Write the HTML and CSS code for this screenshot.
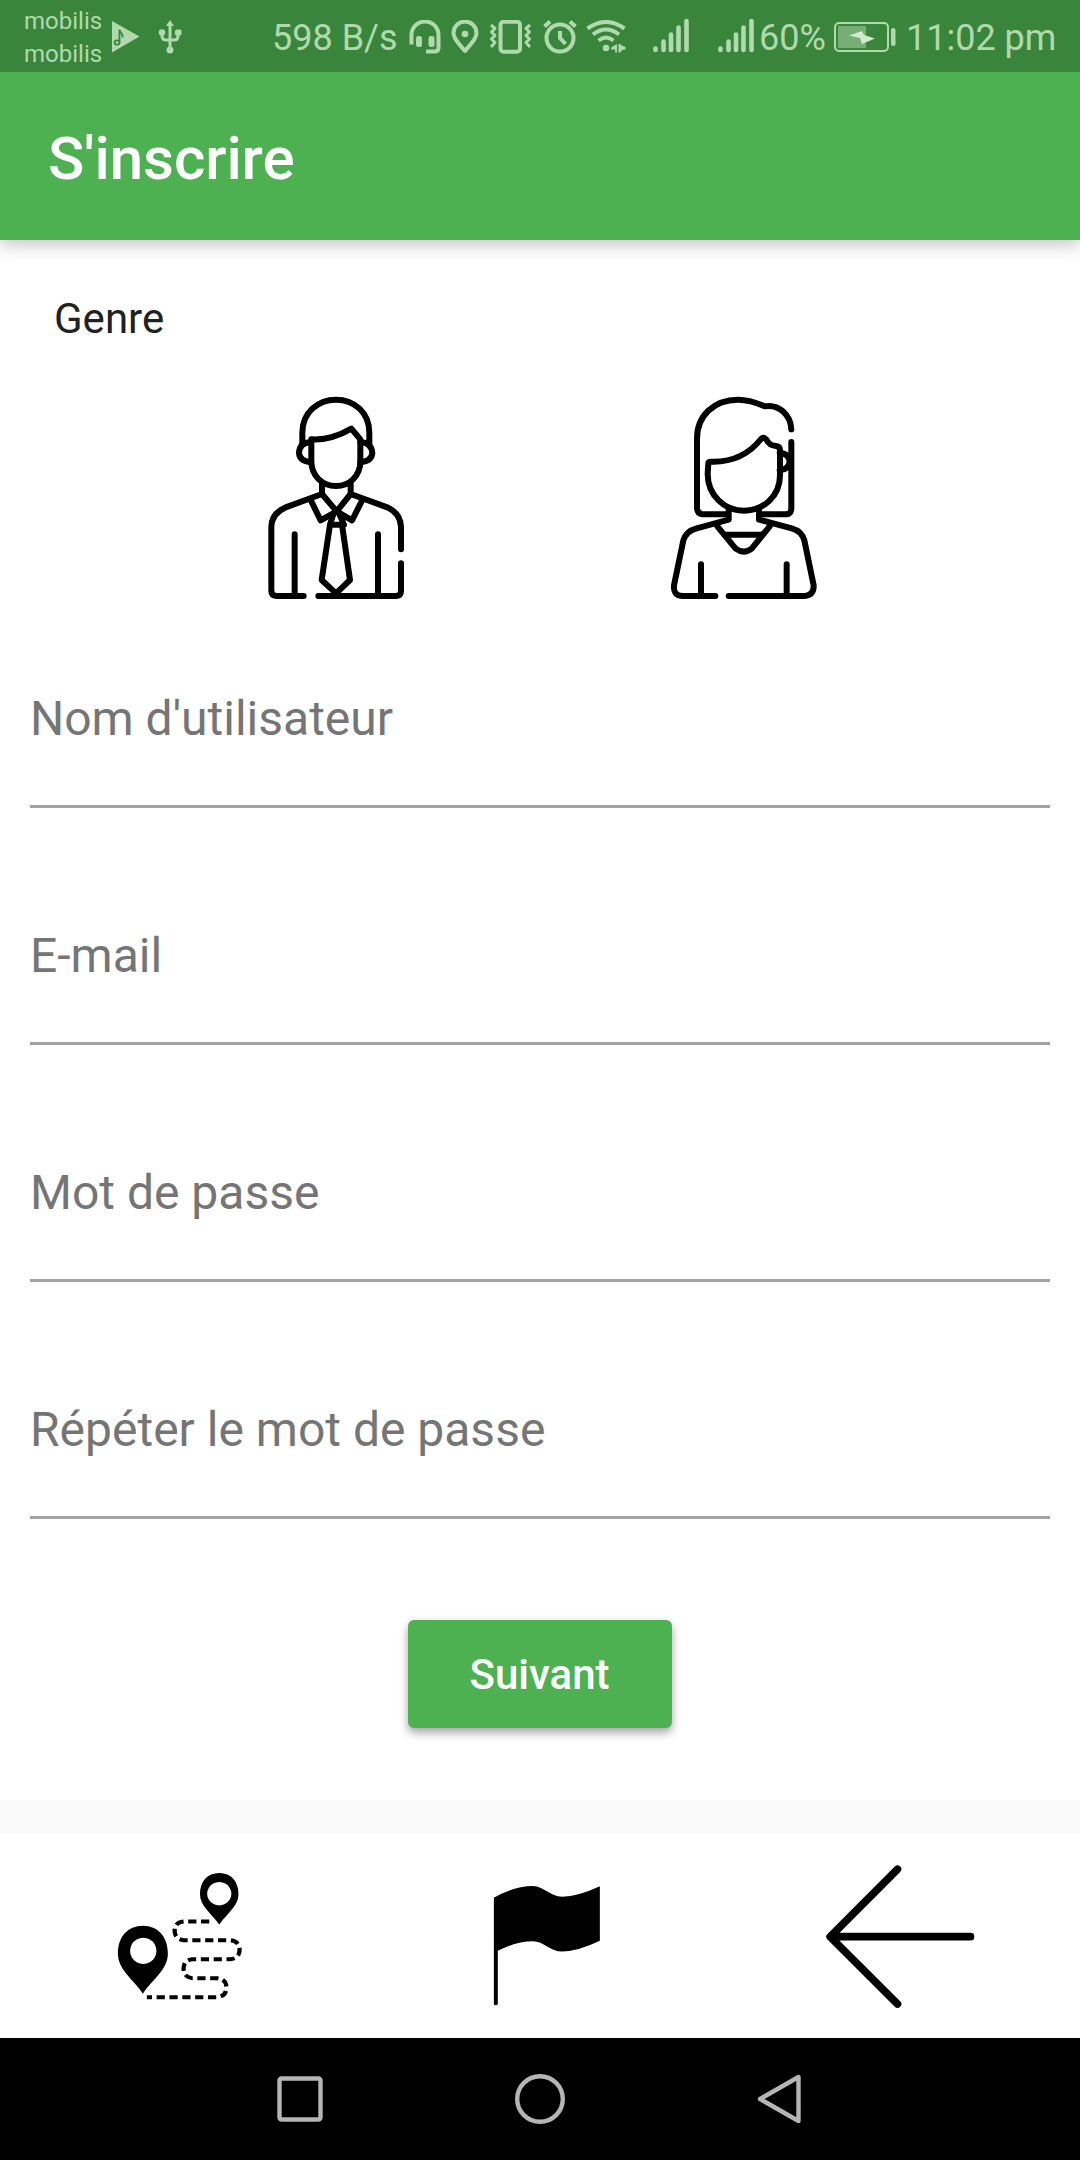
FILE: index.html
```html
<!DOCTYPE html>
<html lang="fr">
<head>
<meta charset="utf-8">
<title>S'inscrire</title>
<link rel="stylesheet" href="styles.css">
</head>
<body>
<div class="screen">
  <div class="status">
    <div class="carrier"><span>mobilis</span><span>mobilis</span></div>
    <svg class="s-play" width="30" height="34" viewBox="0 0 30 34"><path class="fill" d="M2 1L29.500 16.500 2 32.500z"/><path class="note" d="M9.500 22V9.500c.5 4 4 3.500 3 8"/><ellipse class="note" cx="7" cy="22.500" rx="2.500" ry="2.200"/></svg>
    <svg class="s-usb" width="26" height="34" viewBox="0 0 26 34"><path class="line thinner" d="M13 5v24M5 12v4q0 4 4 4h8q4 0 4-4v-4"/><path class="fill" d="M13 0l4 6H9z"/><rect class="fill" x="18" y="9.500" width="6.500" height="6" rx="1.500"/><circle class="fill" cx="5" cy="12.500" r="3.200"/><circle class="fill" cx="13" cy="30" r="3.500"/></svg>
    <span class="speed">598 B/s</span>
    <svg class="s-head" width="32" height="34" viewBox="0 0 32 34"><path class="line" d="M2.500 24.500V15a13.200 13.200 0 0 1 27 0v13q0 3.500-4 3.500H17"/><rect class="fill" x="7" y="16" width="6" height="11" rx="2.500"/><rect class="fill" x="19.500" y="16" width="6" height="11" rx="2.500"/></svg>
    <svg class="s-pin" width="28" height="34" viewBox="0 0 28 34"><path class="line" d="M14 31C10 25.500 2.500 20 2.500 13a11.500 11.500 0 0 1 23 0C25.500 20 18 25.500 14 31z"/><circle class="fill" cx="14" cy="14" r="3.300"/></svg>
    <svg class="s-vib" width="44" height="34" viewBox="0 0 44 34"><rect class="line" x="11.500" y="1.800" width="19.500" height="30" rx="3"/><path class="line thinner" d="M2 5l4 3.500-3.500 3.500 3.500 3.500-3.500 3.500 3.500 3.500-4 4.500M41 5l-4 3.500 3.500 3.500-3.500 3.500 3.500 3.500-3.500 3.500 4 4.500"/></svg>
    <svg class="s-alarm" width="34" height="34" viewBox="0 0 34 34"><circle class="line" cx="17" cy="18" r="13.500"/><path class="line" d="M1.500 6.500L7 1.500M32.500 6.500L27 1.500M17 11v7l5.500 6"/></svg>
    <svg class="s-wifi" width="40" height="34" viewBox="0 0 40 34"><path class="line" d="M1.500 8.500q18.500-13 37 0M7 14.500q13-10 26 0M12.500 20.500q7.500-6 15 0"/><circle class="fill" cx="20" cy="28" r="3.300"/><path class="fill" d="M31 24v8.500h-1.800v-3h-4v-2zM32.500 24h2v8.500h-2zM34.500 25l5 2v2.500l-3.500.5-1.500 2z"/></svg>
    <svg class="s-sig1" width="36" height="35" viewBox="0 0 36 35"><path class="bars" d="M2.500 30.500v1.500M10.500 23.500v8.500M18 16.500v15.500M25.500 9.500v22.500M33.500 3v29"/></svg>
    <svg class="s-sig2" width="36" height="35" viewBox="0 0 36 35"><path class="bars" d="M2.500 30.500v1.500M10.500 23.500v8.500M18 16.500v15.500M25.500 9.500v22.500M33.500 3v29"/></svg>
    <span class="pct">60%</span>
    <svg class="s-bat" width="63" height="30" viewBox="0 0 63 30"><rect class="thin" x="1" y="1" width="53" height="28" rx="4"/><rect class="charge" x="4" y="4" width="28" height="22" rx="1"/><path class="bolt" d="M15 13.500L28 9l2 4 11 3.500L28 22l-2-6z"/><rect class="fill" x="57" y="6" width="4.500" height="18" rx="2"/></svg>
    <span class="clock">11:02 pm</span>
  </div>

  <header class="appbar"><h1>S'inscrire</h1></header>

  <main class="form">
    <p class="genre">Genre</p>
    <div class="people">
      <svg width="170" height="230" viewBox="0 0 510 690">
        <g class="person">
          <path d="M157 190v-32C157 98 203 59 258 59s100 39 100 99v32"/>
          <path d="M183 187q-34 0-36 32 2 25 36 27M331 187q33 0 36 32-2 25-36 27"/>
          <path d="M184 178v66c0 43 33 74 74 74s73-31 73-74v-66l-27-32q-62 36-120 32z"/>
          <path d="M216 311v31l44 52 42-52v-31"/>
          <path d="M216 342l-111 41Q65 401 64 440v192q0 15 16 16h81M302 342l112 41q37 18 39 57v68M453 550v82q0 15-14 16H205"/>
          <path d="M183 362l29 59 48-27 46 27 30-59"/>
          <path d="M250 402l-10 32h42l-14-32M240 434l-25 166 43 40 42-40-24-166"/>
          <path d="M134 463v180M384 463v180"/>
        </g>
      </svg>
      <svg width="180" height="230" viewBox="0 0 540 690">
        <g class="person">
          <path d="M409 148C407 106 372 71 329 79 296 64 278 59 249 59 177 59 126 107 126 176v210q2 16 16 17h73M409 186v202q-2 15-16 15h-75"/>
          <path d="M160 250q0-5 8-5 94 3 150-68 8-8 16 2 10 18 25 18 16 1 16 13v75c0 66-52 107-108 107S158 348 158 282z"/>
          <path d="M374 218q29 3 30 27-3 24-30 26"/>
          <path d="M221 388v31l-96 26q-31 8-40 36L57 616q-3 30 24 32h100M312 388v31l98 26q30 8 38 36l28 135q1 30-28 32H221"/>
          <path d="M187 439l55 67q25 18 48 0l54-67M211 464h108"/>
          <path d="M138 553v92M395 553v92"/>
        </g>
      </svg>
    </div>
    <label class="field">Nom d'utilisateur</label>
    <label class="field">E-mail</label>
    <label class="field">Mot de passe</label>
    <label class="field">Répéter le mot de passe</label>
    <button class="next" type="button">Suivant</button>
  </main>

  <nav class="tabs">
    <svg class="t-route" width="132" height="132" viewBox="40 240 370 395" preserveAspectRatio="none">
      <path fill-rule="evenodd" d="M121 407c42 0 70 33 70 83 0 48-40 74-70 120-30-46-70-72-70-120 0-50 28-83 70-83zm1 36a37 39 0 1 0 .1 0z"/>
      <path fill-rule="evenodd" d="M335 249c33 0 54 25 54 63 0 36-30 56-54 91-24-35-54-55-54-91 0-38 21-63 54-63zm0 27a34 35 0 1 0 .1 0z"/>
      <path class="trail" d="M307 394h-72q-25 3-25 28t25 28h130q27 3 27 29t-27 28H260q-25 3-25 28t25 29h70q25 3 25 28t-25 29H132"/>
    </svg>
    <svg class="t-flag" width="111" height="122" viewBox="1095 285 310 365" preserveAspectRatio="none"><path d="M1103 323q58-35 109-35c30 0 48 32 82 32q43 0 105-31v163q-62 32-105 32c-34 0-52-31-82-31q-46 0-98 29v158q-1 5-6 5t-5-5z"/></svg>
    <svg class="t-back" width="152" height="145" viewBox="135 220 455 435"><path class="arrow" d="M352 236L150 438l202 202M155 438h416"/></svg>
  </nav>

  <div class="sysnav">
    <svg width="46" height="46" viewBox="0 0 46 46"><rect x="2.500" y="2.500" width="41" height="41" rx="2"/></svg>
    <svg width="50" height="50" viewBox="0 0 50 50"><circle cx="25" cy="25" r="22.800"/></svg>
    <svg width="44" height="50" viewBox="0 0 44 50"><path d="M41.500 3v44L3 25z"/></svg>
  </div>
</div>
</body>
</html>
```
FILE: styles.css
```css
* { box-sizing: border-box; }
body, h1, p { margin: 0; }
body { background: #fafafa; font-family: Roboto, "Liberation Sans", sans-serif; }
svg { display: block; flex: none; }
.screen { width: 1080px; height: 2160px; display: flex; flex-direction: column; overflow: hidden; }

.status { position: relative; z-index: 2; height: 72px; flex: none; background: #3a853c; color: #b0daae; display: flex; align-items: flex-start; padding-left: 24px; white-space: nowrap; }
.status > svg { margin-top: 20px; }
.status .fill { fill: #b0daae; }
.status .line { fill: none; stroke: #b0daae; stroke-width: 4; stroke-linejoin: round; }
.status .thinner { stroke-width: 3; }
.status .note { fill: none; stroke: #3a853c; stroke-width: 1.8; }
.status .bars { fill: none; stroke: #b0daae; stroke-width: 4.6; stroke-linecap: round; }
.status .thin { fill: none; stroke: #b0daae; stroke-width: 2; }
.status .charge { fill: #75af75; }
.status .bolt { fill: #d0ebcf; }
.carrier { width: 86px; display: flex; flex-direction: column; padding-top: 5px; font-size: 24px; line-height: 33px; }
.speed, .pct, .clock { font-size: 36px; line-height: 42px; padding-top: 17px; }
.speed { width: 136px; margin-left: 89px; }
.s-usb { margin-left: 17px; }
.s-pin { margin-left: 10px; }
.s-head { margin-left: 1px; }
.s-vib { margin-left: 10px; }
.s-alarm { margin-left: 10px; }
.s-wifi { margin-left: 9px; }
.status > .s-sig1 { margin: 18px 0 0 27px; }
.status > .s-sig2 { margin: 18px 0 0 29px; }
.pct { width: 75px; margin-left: 5px; }
.status > .s-bat { margin-top: 22px; }
.clock { margin-left: 9px; }

.appbar { position: relative; height: 168px; flex: none; background: #4eb151; color: #fff; display: flex; align-items: center; padding: 5px 48px 0; box-shadow: 0 3px 18px rgba(0,0,0,.28); }
.appbar h1 { font-size: 60px; font-weight: 500; line-height: 70px; }

.form { height: 1560px; flex: none; background: #fff; padding: 54px 30px 0; display: flex; flex-direction: column; }
.genre { padding-left: 24px; font-size: 42px; line-height: 49px; color: #212121; }
.people { display: flex; gap: 235px; margin: 37px 0 0 220px; }
.field { height: 237px; flex: none; border-bottom: 3px solid #a3a3a3; padding-top: 120px; font-size: 48px; line-height: 56px; color: #757575; }
.people + .field { height: 198px; padding-top: 81px; }
.next { width: 264px; height: 108px; margin: 101px auto 0; border: 0; border-radius: 6px; background: #4eb151; color: #fff; font: 500 42px/49px Roboto, sans-serif; padding: 0 1px 0 0; box-shadow: 0 6px 8px rgba(0,0,0,.24), 0 2px 10px rgba(0,0,0,.14); }

.people svg .person { fill: none; stroke: #000; stroke-width: 18; stroke-linecap: round; stroke-linejoin: round; }

.tabs { height: 204px; flex: none; margin-top: 34px; background: #fff; display: flex; align-items: flex-start; padding-left: 114px; }
.t-route { margin-top: 36px; }
.t-flag { margin: 51px 0 0 245px; }
.t-back { margin: 30px 0 0 223px; }
.trail { fill: none; stroke: #000; stroke-width: 12; stroke-dasharray: 23 13; }
.arrow { fill: none; stroke: #000; stroke-width: 23; stroke-linecap: round; stroke-linejoin: round; }

.sysnav { flex: 1; background: #000; display: flex; align-items: center; padding-left: 277px; gap: 192px; }
.sysnav svg { fill: none; stroke: #b5b5b5; stroke-width: 4.4; stroke-linejoin: round; }
```
